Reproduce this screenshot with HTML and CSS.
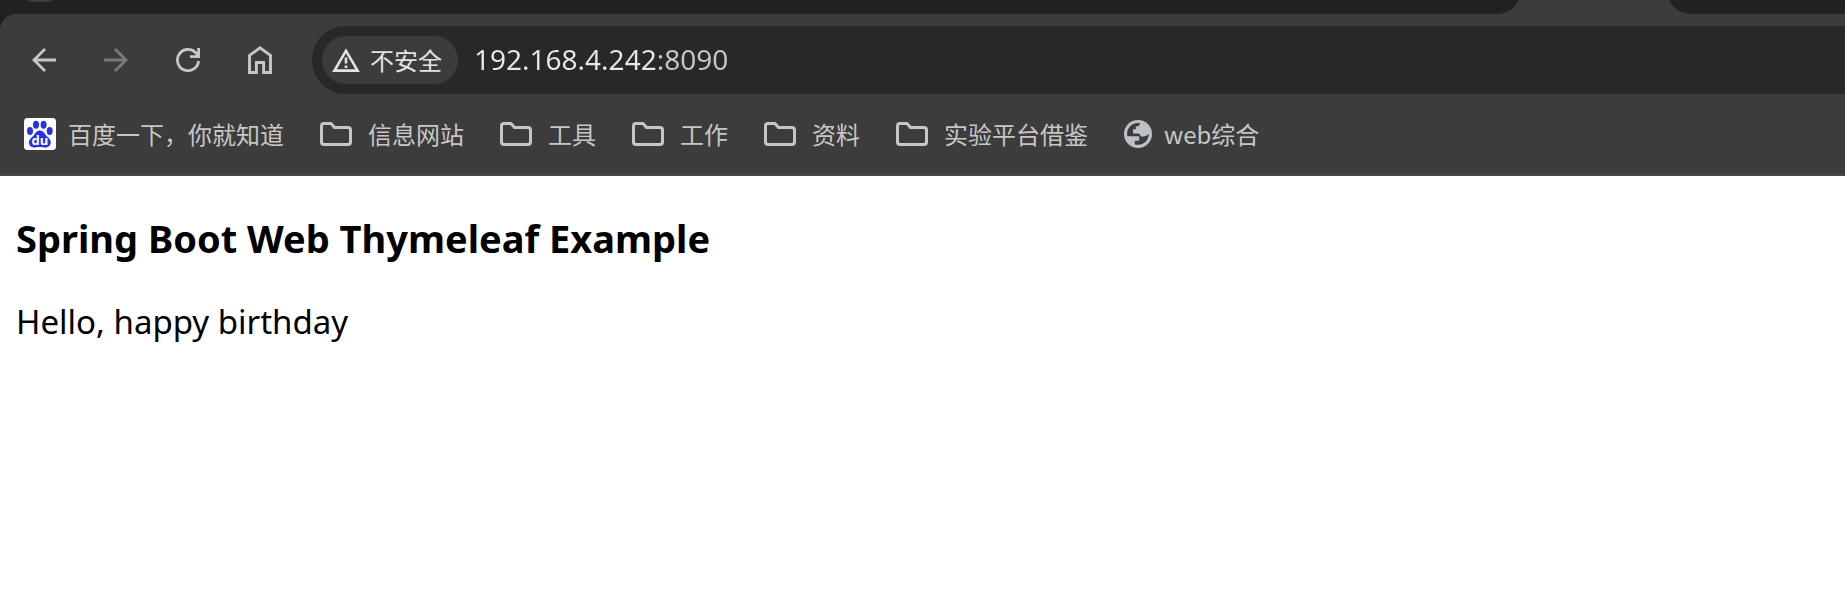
FILE: index.html
```html
<!DOCTYPE html>
<html lang="zh-CN">
<head>
<meta charset="utf-8">
<meta name="viewport" content="width=device-width, initial-scale=1">
<title>Spring Boot Web Thymeleaf Example</title>
<link rel="stylesheet" href="styles.css">
</head>
<body>
<svg class="symbols" aria-hidden="true">
  <symbol id="folder" viewBox="0 0 32 24"><path d="M4 1.5H11L14.5 5.5H28Q30.5 5.5 30.5 8V20Q30.5 22.5 28 22.5H4Q1.5 22.5 1.5 20V4Q1.5 1.5 4 1.5Z" fill="none" stroke="currentColor" stroke-width="3"/></symbol>
</svg>
<header class="browser">
  <div class="tab-strip">
    <div class="tabs-before"><span class="tab-search"></span></div>
    <div class="tabs-after"></div>
  </div>
  <div class="chrome">
    <div class="toolbar">
      <nav class="nav-buttons">
        <button class="nav-button" type="button" aria-label="后退">
          <svg width="24" height="24" viewBox="0 0 24 24"><path d="M24 12H2M13 1L2 12L13 23" fill="none" stroke="currentColor" stroke-width="2.8"/></svg>
        </button>
        <button class="nav-button" type="button" aria-label="前进" disabled>
          <svg width="24" height="24" viewBox="0 0 24 24"><path d="M0 12H22M11 1L22 12L11 23" fill="none" stroke="currentColor" stroke-width="2.8"/></svg>
        </button>
        <button class="nav-button" type="button" aria-label="重新加载">
          <svg width="24" height="24" viewBox="0 0 24 24"><path d="M22.6 13A10.6 10.6 0 1 1 19.5 4.5L22.6 7.8M22.6 0V8.6H14" fill="none" stroke="currentColor" stroke-width="2.8"/></svg>
        </button>
        <button class="nav-button" type="button" aria-label="主页">
          <svg width="24" height="28" viewBox="0 0 24 28"><path d="M1.5 26.5V9.4L12 1.9L22.5 9.4V26.5H15.6V16.5H8.4V26.5Z" fill="none" stroke="currentColor" stroke-width="2.9"/></svg>
        </button>
      </nav>
      <div class="omnibox">
        <button class="security" type="button">
          <svg width="28" height="24" viewBox="0 0 28 24"><path d="M14 2.8L25.6 22.6H2.4Z" fill="none" stroke="currentColor" stroke-width="2.6"/><path d="M14 9.5V15.5M14 17.5V20" stroke="currentColor" stroke-width="2.6"/></svg>
          <span>不安全</span>
        </button>
        <input class="address" type="text" value="192.168.4.242:8090" aria-label="地址栏" spellcheck="false">
      </div>
    </div>
    <nav class="bookmarks" aria-label="书签">
      <a class="bookmark bookmark-site" href="#">
        <svg width="32" height="32" viewBox="0 0 32 32">
          <rect width="32" height="32" rx="3.5" fill="#fff"/>
          <g fill="#2932e1">
            <ellipse cx="12" cy="6.8" rx="3" ry="4"/>
            <ellipse cx="19.6" cy="6.8" rx="3" ry="4"/>
            <ellipse cx="6" cy="13" rx="3" ry="4"/>
            <ellipse cx="25.7" cy="13" rx="3" ry="4"/>
            <path d="M15.8 12.6C19.5 12.6 20.5 16 22.8 18.2C25.2 20.4 27.3 22.2 26.7 25.6C26 29 23 29.8 20 29.4C17 28.9 14.5 28.9 11.6 29.4C8.4 29.8 5.6 28.8 5 25.6C4.4 22.3 6.6 20.4 9 18.2C11.3 16 12.2 12.6 15.8 12.6Z"/>
          </g>
          <text class="paw-text" x="15.8" y="27" text-anchor="middle">du</text>
        </svg>
        <span>百度一下，你就知道</span>
      </a>
      <a class="bookmark" href="#"><svg width="32" height="24"><use href="#folder"/></svg><span>信息网站</span></a>
      <a class="bookmark" href="#"><svg width="32" height="24"><use href="#folder"/></svg><span>工具</span></a>
      <a class="bookmark" href="#"><svg width="32" height="24"><use href="#folder"/></svg><span>工作</span></a>
      <a class="bookmark" href="#"><svg width="32" height="24"><use href="#folder"/></svg><span>资料</span></a>
      <a class="bookmark" href="#"><svg width="32" height="24"><use href="#folder"/></svg><span>实验平台借鉴</span></a>
      <a class="bookmark bookmark-site" href="#">
        <svg width="28" height="28" viewBox="0 0 28 28">
          <circle cx="14" cy="14" r="14" fill="#bdc1c6"/>
          <path d="M16.2 3.2C15.5 5.8 14.2 6.4 11.8 6.4V9.2H9V13.6H13.6C15.6 13.6 16.4 14.6 16.4 16.4H19.2C21.6 16.4 23 15.6 24.8 14C24.8 20 20 24.8 14 24.8C12.8 24.8 11.8 24.7 10.8 24.3V20.8H15.2V17.6C15.2 16.6 14.4 16.2 13.4 16.2H3.3C3.1 15.4 3.1 14.8 3.1 14C3.1 7.9 8 3.1 14 3.1Z" fill="#3c3c3c"/>
        </svg>
        <span>web综合</span>
      </a>
    </nav>
  </div>
</header>
<main class="page">
  <h3 class="title">Spring Boot Web Thymeleaf Example</h3>
  <p class="greeting">Hello, happy birthday</p>
</main>
</body>
</html>
```
FILE: styles.css
```css
* { box-sizing: border-box; }

body {
  margin: 0;
  background: #fff;
  color: #000;
  font-family: "Noto Sans", "Noto Sans CJK SC", sans-serif;
}

.symbols { display: none; }

svg { display: block; flex: none; }

.browser {
  background: #202221;
  color: #c7c7c7;
}

.tab-strip {
  display: flex;
  justify-content: space-between;
  align-items: flex-end;
  gap: 146px;
  height: 14px;
  overflow: hidden;
  background: #3c3c3c;
}

.tabs-before,
.tabs-after {
  height: 48px;
  background: #202221;
}

.tabs-before {
  flex: 1;
  padding: 0 22px 12px;
  border-bottom-right-radius: 24px;
}

.tabs-after {
  flex: none;
  width: 178px;
  border-bottom-left-radius: 24px;
}

.tab-search {
  display: block;
  width: 36px;
  height: 36px;
  border-radius: 12px;
  background: #3c3c3c;
}

.chrome {
  padding-top: 12px;
  border-bottom: 2px solid #474747;
  border-top-left-radius: 16px;
  background: #3c3c3c;
}

.toolbar {
  display: flex;
  align-items: center;
  gap: 16px;
  padding-left: 8px;
}

.nav-buttons { display: flex; }

.nav-button {
  display: flex;
  align-items: center;
  justify-content: center;
  width: 72px;
  height: 68px;
  padding: 0;
  border: 0;
  background: none;
  color: #c7c7c7;
}

.nav-button:disabled { color: #7b7b7b; }

.omnibox {
  display: flex;
  flex: 1;
  align-items: center;
  gap: 16px;
  height: 68px;
  padding-left: 10px;
  border-radius: 34px 0 0 34px;
  background: #282828;
}

.security {
  display: flex;
  flex: none;
  align-items: center;
  gap: 10px;
  height: 48px;
  padding: 0 16px 0 10px;
  border: 0;
  border-radius: 24px;
  background: #3c3c3c;
  color: #e3e3e3;
  font: 24px/32px "Noto Sans CJK SC", sans-serif;
}

.address {
  flex: 1;
  min-width: 0;
  height: 48px;
  padding: 0 0 2px;
  border: 0;
  outline: 0;
  background: linear-gradient(to right, #e8e8e8 183px, #c7c7c7 183px);
  -webkit-background-clip: text;
  background-clip: text;
  color: transparent;
  font: 28px/46px "Noto Sans", sans-serif;
}

.bookmarks {
  display: flex;
  align-items: center;
  gap: 36px;
  height: 80px;
  padding-left: 24px;
}

.bookmark {
  display: flex;
  align-items: center;
  gap: 16px;
  color: #c7c7c7;
  font: 24px/32px "Noto Sans CJK SC", sans-serif;
  text-decoration: none;
  white-space: nowrap;
}

.bookmark-site { gap: 12px; }

.paw-text {
  fill: #fff;
  font: bold 13px "Open Sans", sans-serif;
}

.page { padding: 0 16px; }

.title {
  margin: 34px 0 0;
  font-size: 38px;
  line-height: 56px;
}

.greeting {
  margin: 32px 0 0;
  font-size: 33px;
  line-height: 48px;
}
```
